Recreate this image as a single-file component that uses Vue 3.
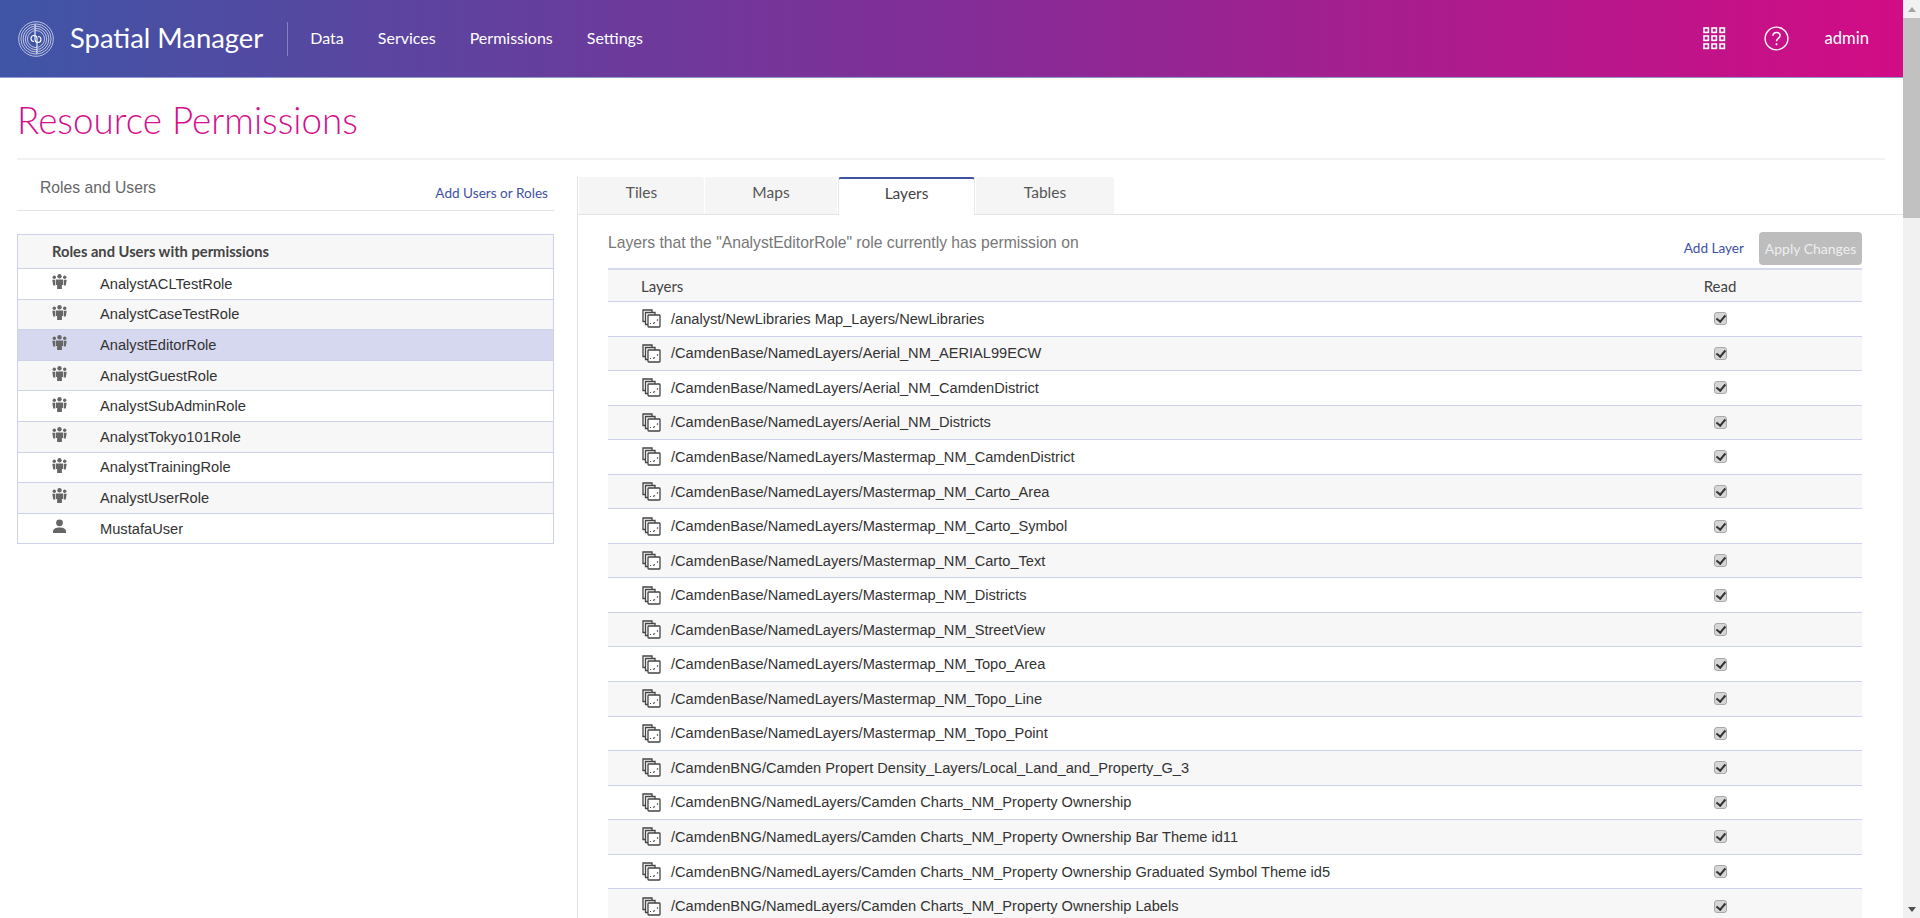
<template>
  <div class="shell">
    <div class="page">
      <header class="topbar">
        <div class="brand">
          <svg class="logo" viewBox="0 0 36 36" fill="none" stroke="#fff">
            <circle cx="18" cy="18" r="17.300" stroke-width="0.800" opacity="0.8" />
            <circle cx="18" cy="18" r="15.100" stroke-width="0.800" opacity="0.8" />
            <circle cx="18" cy="18" r="12.900" stroke-width="0.800" opacity="0.85" />
            <circle cx="18" cy="18" r="10.700" stroke-width="0.800" opacity="0.85" />
            <circle cx="18" cy="18" r="8.500" stroke-width="0.800" opacity="0.85" />
            <path d="M16.500 3v15.500a3.500 3.500 0 1 0 3.500-3.500" stroke-width="1.200" stroke="#3f55a6" />
            <path d="M19.500 33V17.500a3.500 3.500 0 1 0-3.500 3.500" stroke-width="1.200" stroke="#3f55a6" />
            <path d="M17 3v15.500a3 3 0 1 0 3-3" stroke-width="1.100" />
            <path d="M19 33V17.500a3 3 0 1 0-3 3" stroke-width="1.100" />
          </svg>
          <span class="brand-name">Spatial Manager</span>
        </div>
        <nav class="main-nav">
          <a v-for="item in navItems" :key="item">{{ item }}</a>
        </nav>
        <div class="top-right">
          <svg class="grid-icon" viewBox="0 0 23 23" fill="none" stroke="#fff" stroke-width="1.600">
            <template v-for="y in [1, 9, 17]" :key="y">
              <rect v-for="x in [1, 9, 17]" :key="x" :x="x" :y="y" width="4.400" height="4.400" />
            </template>
          </svg>
          <svg class="help-icon" viewBox="0 0 25 25" fill="none" stroke="#fff">
            <circle cx="12.500" cy="12.500" r="11.400" stroke-width="1.400" />
            <path d="M9 9.800c0-2 1.600-3.300 3.600-3.300s3.500 1.300 3.500 3.100c0 2.700-3.600 2.800-3.600 5.600" stroke-width="1.500" />
            <circle cx="12.500" cy="18.300" r="1" fill="#fff" stroke="none" />
          </svg>
          <span class="user">admin</span>
        </div>
      </header>

      <div class="title-wrap">
        <h1>Resource Permissions</h1>
      </div>

      <div class="columns">
        <aside class="left-col">
          <div class="left-head">
            <span class="left-title">Roles and Users</span>
            <a class="link">Add Users or Roles</a>
          </div>
          <div class="role-table">
            <div class="role-head">Roles and Users with permissions</div>
            <div
              v-for="role in roles"
              :key="role.name"
              class="role-row"
              :class="{ selected: role.name === selectedRole }"
            >
              <svg v-if="role.user" class="role-icon" viewBox="0 0 15 15" fill="#666">
                <circle cx="7.500" cy="3.800" r="3.400" />
                <path d="M1 14v-1.600c0-2.600 3-4 6.500-4s6.500 1.400 6.500 4V14z" />
              </svg>
              <svg v-else class="role-icon" viewBox="0 0 15 15" fill="#666">
                <circle cx="2.300" cy="3.200" r="1.700" />
                <circle cx="12.700" cy="3.200" r="1.700" />
                <circle cx="7.500" cy="2.300" r="2.200" />
                <path d="M0.300 5.800h3v5.700H1.200zM14.700 5.800h-3v5.700h2.100zM4 5.600h7v5.400H9.900V15H5.100v-4H4z" />
              </svg>
              <span class="role-name">{{ role.name }}</span>
            </div>
          </div>
        </aside>

        <section class="right-col">
          <div class="tabs">
            <div
              v-for="tab in tabs"
              :key="tab.name"
              class="tab"
              :class="{ active: tab.name === 'Layers' }"
              :style="{ width: tab.width + 'px' }"
            >
              {{ tab.name }}
            </div>
          </div>
          <div class="tab-body">
            <div class="tab-tools">
              <span class="tab-desc">Layers that the "AnalystEditorRole" role currently has permission on</span>
              <a class="link add-layer">Add Layer</a>
              <button class="apply" disabled>Apply Changes</button>
            </div>
            <div class="layer-table">
              <div class="layer-head">
                <span class="layer-head-name">Layers</span>
                <span class="read-col">Read</span>
              </div>
              <div v-for="layer in layers" :key="layer" class="layer-row">
                <svg class="layer-icon" viewBox="0 0 19 19" fill="none" stroke="#444" stroke-width="1.300">
                  <path d="M3.500 12.500H1V1h9v2.500" />
                  <path d="M6 15.500H3.500V3.500H13V6" />
                  <rect x="6" y="6" width="12" height="12" rx="0.800" fill="#fff" />
                  <path d="M8 14.500h1M11 14.500l2-1M15 11.500l1-1" stroke-width="1.100" />
                </svg>
                <span class="layer-name">{{ layer }}</span>
                <span class="read-col"><input class="read-check" type="checkbox" checked /></span>
              </div>
            </div>
          </div>
        </section>
      </div>
    </div>

    <div class="scrollbar">
      <div class="scroll-btn"><span class="arrow up"></span></div>
      <div class="scroll-thumb"></div>
      <div class="scroll-track"></div>
      <div class="scroll-btn"><span class="arrow down"></span></div>
    </div>
  </div>
</template>

<script setup>
const navItems = ['Data', 'Services', 'Permissions', 'Settings']

const selectedRole = 'AnalystEditorRole'

const roles = [
  { name: 'AnalystACLTestRole' },
  { name: 'AnalystCaseTestRole' },
  { name: 'AnalystEditorRole' },
  { name: 'AnalystGuestRole' },
  { name: 'AnalystSubAdminRole' },
  { name: 'AnalystTokyo101Role' },
  { name: 'AnalystTrainingRole' },
  { name: 'AnalystUserRole' },
  { name: 'MustafaUser', user: true }
]

const tabs = [
  { name: 'Tiles', width: 125 },
  { name: 'Maps', width: 132 },
  { name: 'Layers', width: 137 },
  { name: 'Tables', width: 138 }
]

const base = '/CamdenBase/NamedLayers/'
const charts = '/CamdenBNG/NamedLayers/Camden Charts_NM_Property Ownership'

const layers = [
  '/analyst/NewLibraries Map_Layers/NewLibraries',
  base + 'Aerial_NM_AERIAL99ECW',
  base + 'Aerial_NM_CamdenDistrict',
  base + 'Aerial_NM_Districts',
  base + 'Mastermap_NM_CamdenDistrict',
  base + 'Mastermap_NM_Carto_Area',
  base + 'Mastermap_NM_Carto_Symbol',
  base + 'Mastermap_NM_Carto_Text',
  base + 'Mastermap_NM_Districts',
  base + 'Mastermap_NM_StreetView',
  base + 'Mastermap_NM_Topo_Area',
  base + 'Mastermap_NM_Topo_Line',
  base + 'Mastermap_NM_Topo_Point',
  '/CamdenBNG/Camden Propert Density_Layers/Local_Land_and_Property_G_3',
  charts,
  charts + ' Bar Theme id11',
  charts + ' Graduated Symbol Theme id5',
  charts + ' Labels'
]
</script>

<style scoped>
.shell {
  display: flex;
  height: 100vh;
  overflow: hidden;
}

.page {
  flex: 1;
  min-width: 0;
  display: flex;
  flex-direction: column;
  font-family: "Liberation Sans", Arial, sans-serif;
  color: #333;
}

/* the page is scrolled in the reference, the bar is drawn by hand */
.scrollbar {
  width: 17px;
  flex: none;
  display: flex;
  flex-direction: column;
  background: #f1f1f1;
}

.scroll-btn {
  height: 18px;
  flex: none;
  display: flex;
  align-items: center;
  justify-content: center;
}

.scroll-thumb {
  height: 200px;
  flex: none;
  background: #c1c1c1;
}

.scroll-track {
  flex: 1;
}

.arrow {
  width: 0;
  height: 0;
  border-left: 4.5px solid transparent;
  border-right: 4.5px solid transparent;
}

.arrow.up {
  border-bottom: 5px solid #a3a3a3;
}

.arrow.down {
  border-top: 5px solid #505050;
}

.topbar {
  height: 77px;
  flex: none;
  display: flex;
  align-items: center;
  color: #fff;
  background: linear-gradient(90deg, #3f55a6 0%, #832d97 50%, #d20c85 100%);
  border-bottom: 1px solid #8f9bd0;
  font-family: Lato, "Noto Sans", sans-serif;
}

.brand {
  display: flex;
  align-items: center;
  height: 34px;
  padding: 0 24px 0 18px;
  border-right: 1px solid rgba(255, 255, 255, 0.3);
}

.logo {
  width: 36px;
  height: 36px;
  flex: none;
}

.brand-name {
  margin: -2px 0 0 16px;
  font-size: 27.4px;
}

.main-nav {
  display: flex;
  gap: 34px;
  margin: -2px 0 0 22px;
  font-size: 16px;
}

.top-right {
  margin-left: auto;
  display: flex;
  align-items: center;
  padding-right: 34px;
}

.grid-icon {
  width: 23px;
  height: 23px;
}

.help-icon {
  width: 25px;
  height: 25px;
  margin-left: 38px;
}

.user {
  margin: -2px 0 0 36px;
  font-size: 16.6px;
}

.title-wrap {
  margin: 0 18px 0 17px;
  height: 80px;
  flex: none;
  border-bottom: 2px solid #f1f1f1;
}

h1 {
  margin: 0;
  padding-top: 19px;
  font-family: Lato, "Noto Sans", sans-serif;
  font-size: 36.8px;
  font-weight: 300;
  line-height: 46px;
  color: #d5108d;
}

.columns {
  flex: 1;
  min-height: 0;
  display: flex;
  align-items: stretch;
  padding-top: 17px;
}

.left-col {
  width: 537px;
  flex: none;
  margin: 0 23px 0 17px;
}

.left-head {
  height: 33px;
  display: flex;
  justify-content: space-between;
  padding: 0 6px 0 23px;
  border-bottom: 1px solid #e3e3e3;
}

.left-title {
  font-size: 15.7px;
  line-height: 22px;
  color: #666;
}

.link {
  font-family: Lato, "Noto Sans", sans-serif;
  font-size: 13.6px;
  color: #3f51a3;
}

.left-head .link {
  line-height: 32px;
}

.role-table {
  margin-top: 23px;
  border: 1px solid #ccd0e8;
}

.role-head {
  height: 33px;
  padding-left: 34px;
  line-height: 33px;
  background: #f7f7f7;
  font-family: Lato, "Noto Sans", sans-serif;
  font-size: 14.7px;
  font-weight: 700;
  color: #444;
  border-bottom: 1px solid #ccd0e8;
}

.role-row {
  height: 29.6px;
  display: flex;
  align-items: center;
  padding-left: 34px;
  border-bottom: 1px solid #ccd0e8;
  font-size: 14.67px;
}

.role-row:last-child {
  border-bottom: none;
}

.role-row:nth-child(odd) {
  background: #f7f7f7;
}

.role-row.selected {
  background: #d6d8ef;
}

.role-icon {
  width: 15px;
  height: 15px;
  margin-top: -4px;
}

.role-name {
  margin-left: 33px;
}

.right-col {
  flex: 1;
  min-width: 0;
  border-left: 1px solid #e3e3e3;
}

.tabs {
  display: flex;
  gap: 1px;
  padding-left: 1px;
  border-bottom: 1px solid #e3e3e3;
}

.tab {
  height: 37px;
  line-height: 30px;
  text-align: center;
  background: #f5f5f5;
  border-radius: 3px 3px 0 0;
  font-family: Lato, "Noto Sans", sans-serif;
  font-size: 15.5px;
  color: #555;
  box-sizing: border-box;
}

.tab.active {
  height: 38px;
  margin-bottom: -1px;
  background: #fff;
  border-top: 2px solid #3f51a3;
  border-left: 1px solid #e8e8e8;
  border-right: 1px solid #e8e8e8;
  line-height: 28px;
  color: #444;
}

.tab-body {
  padding: 17px 41px 0 30px;
}

.tab-tools {
  display: flex;
  align-items: flex-start;
  height: 36px;
}

.tab-desc {
  flex: 1;
  font-size: 15.7px;
  line-height: 22px;
  color: #777;
}

.add-layer {
  line-height: 32px;
  margin-right: 15px;
}

.apply {
  width: 103px;
  height: 33px;
  padding: 0;
  border: none;
  border-radius: 4px;
  background: #bdbdbd;
  color: #eee;
  font-family: Lato, "Noto Sans", sans-serif;
  font-size: 14px;
}

.layer-head {
  height: 31px;
  display: flex;
  align-items: center;
  padding-left: 33px;
  background: #f7f7f7;
  border-top: 2px solid #d5d9ee;
  border-bottom: 1px solid #ccd0e8;
  font-family: Lato, "Noto Sans", sans-serif;
  font-size: 15px;
  color: #444;
}

.layer-head-name {
  flex: 1;
}

.read-col {
  width: 70px;
  margin-right: 107px;
  display: flex;
  justify-content: center;
}

.layer-row {
  height: 33.55px;
  display: flex;
  align-items: center;
  padding-left: 34px;
  border-bottom: 1px solid #ccd0e8;
  font-size: 14.62px;
}

.layer-row:nth-child(odd) {
  background: #f7f7f7;
}

.layer-icon {
  width: 19px;
  height: 19px;
  flex: none;
}

.layer-name {
  flex: 1;
  margin-left: 10px;
}

.read-check {
  appearance: none;
  position: relative;
  width: 13px;
  height: 13px;
  margin: 0;
  border: 1px solid #a8a8a8;
  border-radius: 3px;
  background: #d6d6d6;
}

.read-check::after {
  content: '';
  position: absolute;
  left: 3.5px;
  top: 0;
  width: 3.5px;
  height: 7px;
  border: solid #333;
  border-width: 0 2.5px 2.5px 0;
  transform: rotate(40deg);
}
</style>

<style>
html,
body {
  overflow: hidden;
}
</style>
